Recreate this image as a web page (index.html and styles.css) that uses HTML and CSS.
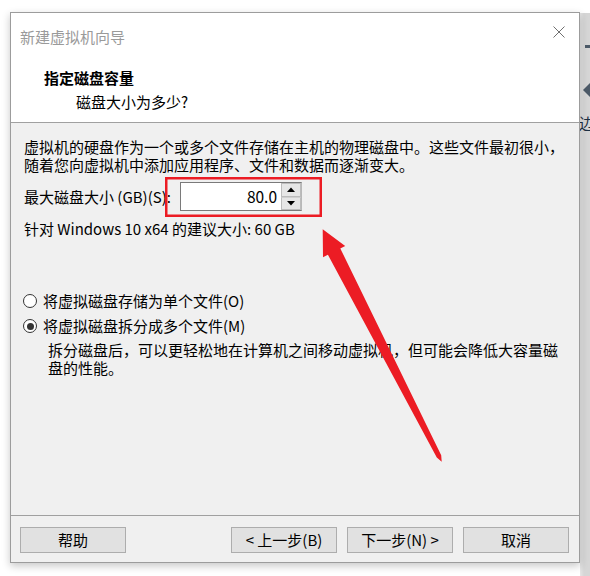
FILE: index.html
```html
<!DOCTYPE html>
<html lang="zh-CN">
<head>
<meta charset="utf-8">
<title>新建虚拟机向导</title>
<link rel="stylesheet" href="styles.css">
</head>
<body>
<div class="desktop">
  <div class="window">
    <div class="header">
      <div class="titlebar">
        <span class="title">新建虚拟机向导</span>
        <svg class="close" width="12" height="12" viewBox="0 0 12 12"><path d="M0.5 0.5 L11.5 11.5 M11.5 0.5 L0.5 11.5" stroke="#707070" stroke-width="1" fill="none"/></svg>
      </div>
      <div class="heading">指定磁盘容量</div>
      <div class="subheading">磁盘大小为多少?</div>
    </div>
    <div class="body">
      <p class="intro">虚拟机的硬盘作为一个或多个文件存储在主机的物理磁盘中。这些文件最初很小，<br>随着您向虚拟机中添加应用程序、文件和数据而逐渐变大。</p>
      <div class="size-row">
        <span class="size-label">最大磁盘大小 (GB)(S):</span>
        <div class="spin">
          <div class="spin-value">80.0</div>
          <div class="spin-btns">
            <div class="spin-btn"><svg width="8" height="5" viewBox="0 0 8 5"><path d="M0 5 L4 0.5 L8 5 Z" fill="#000"/></svg></div>
            <div class="spin-btn"><svg width="8" height="5" viewBox="0 0 8 5"><path d="M0 0 L8 0 L4 4.5 Z" fill="#000"/></svg></div>
          </div>
        </div>
      </div>
      <div class="hint">针对 Windows 10 x64 的建议大小: 60 GB</div>
      <div class="options">
        <div class="radio-row"><span class="radio"></span><span>将虚拟磁盘存储为单个文件(O)</span></div>
        <div class="radio-row second"><span class="radio checked"></span><span>将虚拟磁盘拆分成多个文件(M)</span></div>
        <p class="desc">拆分磁盘后，可以更轻松地在计算机之间移动虚拟机，但可能会降低大容量磁<br>盘的性能。</p>
      </div>
    </div>
    <div class="footer">
      <div class="btn help">帮助</div>
      <div class="btn">&lt; 上一步(B)</div>
      <div class="btn">下一步(N) &gt;</div>
      <div class="btn">取消</div>
    </div>
  </div>
  <div class="strip">
    <div class="strip-dash"></div>
    <div class="strip-tri"></div>
    <div class="strip-text">边</div>
  </div>
  <svg class="annotation" width="590" height="576" viewBox="0 0 590 576">
    <rect x="166.25" y="178.25" width="154.5" height="37.5" fill="none" stroke="#ec1c24" stroke-width="2.5"/>
    <polygon points="322.7,229.3 345.2,245.9 340.3,248.4 441.2,455.2 441.7,461.8 436.8,457.4 327.9,254.8 323,257.3" fill="#ec1c24"/>
  </svg>
</div>
</body>
</html>
```

FILE: styles.css
```css
html, body {
  margin: 0;
  padding: 0;
  background: #ffffff;
}

body {
  width: 590px;
  height: 576px;
  overflow: hidden;
  font-family: "Noto Sans CJK SC", "Noto Sans", sans-serif;
  font-size: 15px;
  color: #000;
}

.desktop {
  position: relative;
  width: 590px;
  height: 576px;
  box-sizing: border-box;
  padding: 12px 0 0 10px;
  display: flex;
  align-items: flex-start;
}

.window {
  position: relative;
  z-index: 1;
  width: 570px;
  height: 551px;
  box-sizing: border-box;
  border: 1px solid #9c9c9c;
  background: #f0f0f0;
  display: flex;
  flex-direction: column;
  box-shadow: 0 3px 8px rgba(0, 0, 0, 0.22);
}

.header {
  height: 110px;
  box-sizing: border-box;
  background: #ffffff;
  border-bottom: 1px solid #a0a0a0;
  padding: 13px 14px 0 9px;
  line-height: 18px;
}

.titlebar {
  display: flex;
  justify-content: space-between;
  align-items: flex-start;
}

.title {
  margin-top: 2px;
  color: #9a9a9a;
}

.close {
  display: block;
}

.heading {
  margin-top: 23px;
  margin-left: 24px;
  font-weight: bold;
}

.subheading {
  margin-top: 6px;
  margin-left: 56px;
}

.body {
  flex: 1;
  padding: 15px 4px 0 13px;
  line-height: 18px;
  border-bottom: 1px solid #a0a0a0;
}

.intro {
  margin: 0;
  white-space: nowrap;
}

.size-row {
  margin-top: 8px;
  display: flex;
  align-items: center;
  height: 29px;
}

.size-label {
  width: 156px;
  white-space: nowrap;
}

.spin {
  width: 122px;
  height: 29px;
  box-sizing: border-box;
  border: 1px solid #7a7a7a;
  border-right-color: #b8b8b8;
  background: #fff;
  display: flex;
}

.spin-value {
  flex: 1;
  text-align: right;
  padding-right: 4px;
  line-height: 27px;
  font-size: 15.5px;
}

.spin-btns {
  width: 20px;
  display: flex;
  flex-direction: column;
}

.spin-btn {
  flex: 1;
  border: 1px solid #bcbcbc;
  background: #e6e6e6;
  display: flex;
  align-items: center;
  justify-content: center;
}

.spin-btn + .spin-btn {
  border-top-color: #d0d0d0;
}

.spin-btn svg {
  display: block;
}

.hint {
  margin-top: 9px;
}

.options {
  margin-top: 54px;
}

.radio-row {
  display: flex;
  align-items: center;
  gap: 6px;
}

.radio-row.second {
  margin-top: 7px;
}

.radio {
  margin-left: -1px;
  width: 12px;
  height: 12px;
  border: 1px solid #333;
  border-radius: 50%;
  background: #fff;
  display: flex;
  align-items: center;
  justify-content: center;
}

.radio.checked::after {
  content: "";
  width: 7px;
  height: 7px;
  border-radius: 50%;
  background: #333;
}

.desc {
  margin: 6px 0 0 24px;
  white-space: nowrap;
}

.footer {
  height: 46px;
  box-sizing: border-box;
  padding: 11px 10px 0 9px;
  display: flex;
  gap: 10px;
}

.btn {
  width: 106px;
  height: 26px;
  box-sizing: border-box;
  border: 1px solid #adadad;
  background: #e1e1e1;
  display: flex;
  align-items: center;
  justify-content: center;
  line-height: 18px;
  white-space: nowrap;
}

.btn.help {
  margin-right: auto;
}

.strip {
  width: 10px;
  height: 563px;
  margin-top: 1px;
  background: linear-gradient(to right, #e6e6e6 0, #d6d6d6 4px, #d6d6d6 100%);
  overflow: hidden;
}

.strip-dash {
  margin-top: 32px;
  margin-left: 5px;
  width: 5px;
  height: 3px;
  background: #4d5b69;
}

.strip-tri {
  margin-top: 34px;
  margin-left: 3px;
  width: 0;
  height: 0;
  border-top: 8px solid transparent;
  border-bottom: 8px solid transparent;
  border-right: 8px solid #4d5b69;
}

.strip-text {
  margin-top: 16px;
  margin-left: -1px;
  line-height: 18px;
  color: #1c2f44;
  white-space: nowrap;
}

.annotation {
  position: absolute;
  left: 0;
  top: 0;
  z-index: 2;
  pointer-events: none;
}
```
